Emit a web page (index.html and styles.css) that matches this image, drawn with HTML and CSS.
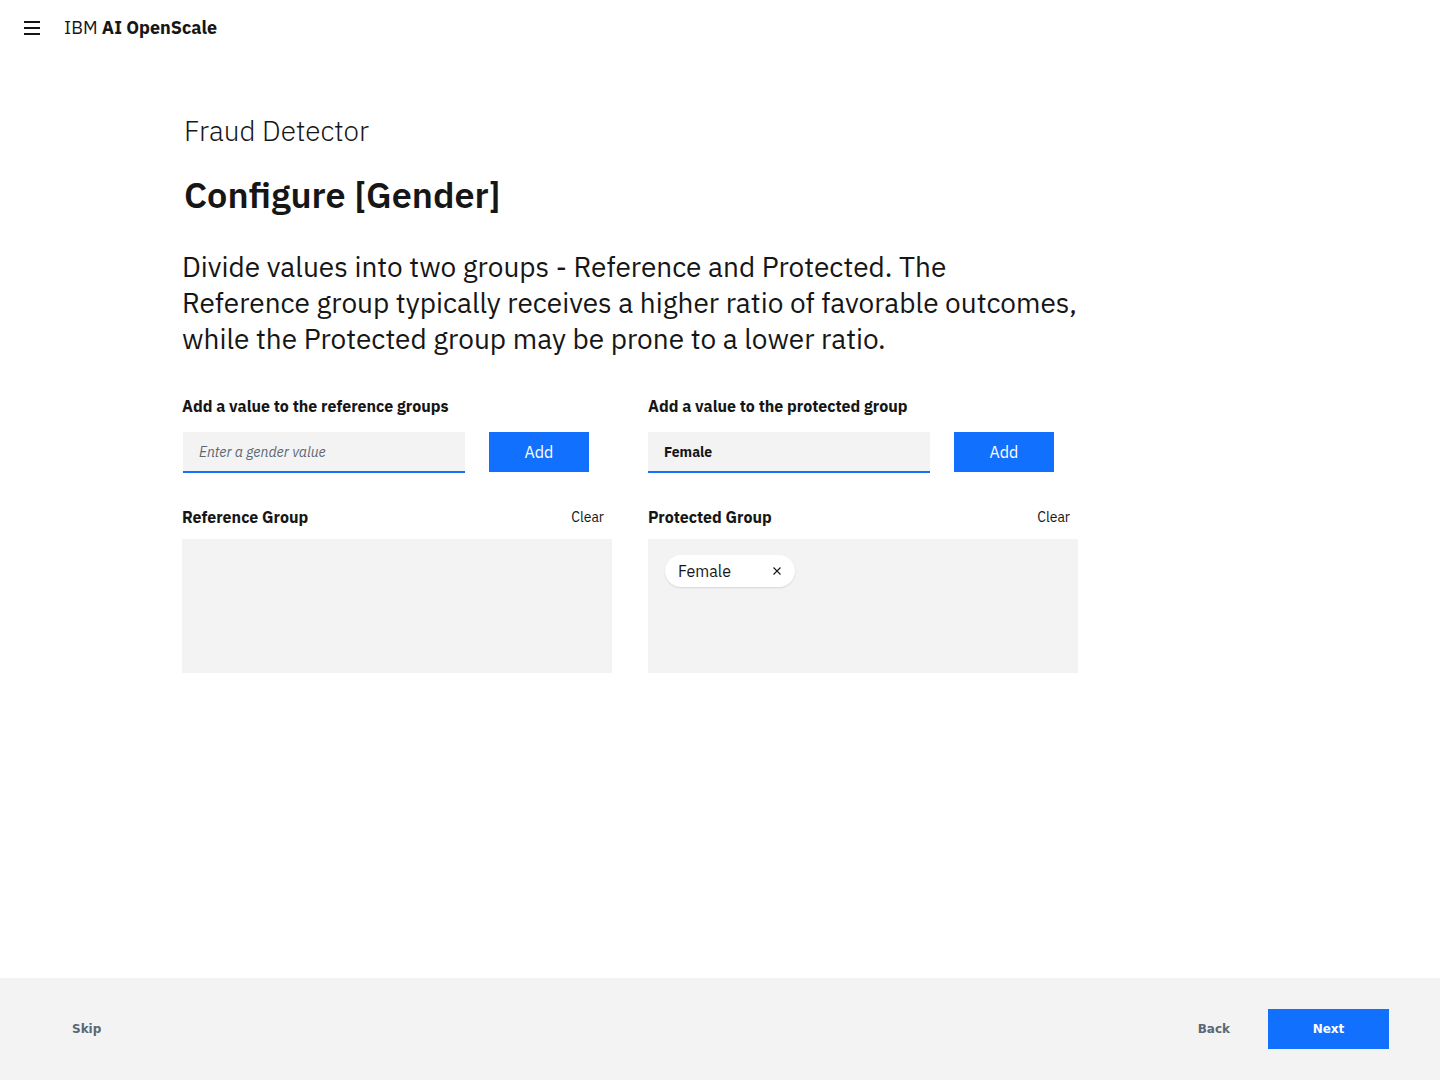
FILE: index.html
```html
<!DOCTYPE html>
<html lang="en">
<head>
<meta charset="utf-8">
<title>IBM AI OpenScale</title>
<link rel="stylesheet" href="styles.css">
</head>
<body>
<header class="topbar">
  <button class="menu-btn" aria-label="Menu">
    <svg width="16" height="14" viewBox="0 0 16 14"><rect x="0" y="0" width="16" height="2" fill="#161616"/><rect x="0" y="6" width="16" height="2" fill="#161616"/><rect x="0" y="12" width="16" height="2" fill="#161616"/></svg>
  </button>
  <span class="brand">IBM <b>AI OpenScale</b></span>
</header>

<main class="content">
  <p class="eyebrow">Fraud Detector</p>
  <h1 class="title">Configure [Gender]</h1>
  <p class="lead">Divide values into two groups - Reference and Protected. The<br>Reference group typically receives a higher ratio of favorable outcomes,<br>while the Protected group may be prone to a lower ratio.</p>

  <div class="columns">
    <section class="col">
      <h2 class="field-label">Add a value to the reference groups</h2>
      <div class="add-row">
        <div class="input placeholder">Enter a gender value</div>
        <button class="btn-add">Add</button>
      </div>
      <div class="group-head">
        <h3 class="group-title">Reference Group</h3>
        <span class="clear">Clear</span>
      </div>
      <div class="group-box"></div>
    </section>

    <section class="col">
      <h2 class="field-label">Add a value to the protected group</h2>
      <div class="add-row">
        <div class="input filled">Female</div>
        <button class="btn-add">Add</button>
      </div>
      <div class="group-head">
        <h3 class="group-title">Protected Group</h3>
        <span class="clear">Clear</span>
      </div>
      <div class="group-box">
        <span class="chip">Female<svg class="chip-x" width="10" height="10" viewBox="0 0 10 10"><path d="M1.5 1.5 L8.5 8.5 M8.5 1.5 L1.5 8.5" stroke="#161616" stroke-width="1.1"/></svg></span>
      </div>
    </section>
  </div>
</main>

<footer class="footer">
  <span class="link-btn">Skip</span>
  <div class="footer-right">
    <span class="link-btn">Back</span>
    <button class="btn-next">Next</button>
  </div>
</footer>
</body>
</html>
```

FILE: styles.css
```css
* { box-sizing: border-box; }
html, body { margin: 0; padding: 0; }
body {
  width: 1440px;
  height: 1080px;
  font-family: "IBM Plex Sans", Roboto, "Liberation Sans", sans-serif;
  color: #161616;
  background: #ffffff;
  display: flex;
  flex-direction: column;
}

.topbar {
  height: 56px;
  display: flex;
  align-items: center;
  padding-left: 24px;
}
.menu-btn {
  border: 0;
  background: none;
  padding: 0;
  width: 16px;
  height: 14px;
  display: flex;
}
.brand {
  margin-left: 24px;
  font-size: 18px;
  font-weight: 400;
  margin-top: -1px;
}
.brand b { font-weight: 700; }

.content {
  flex: 1;
  padding-left: 182px;
  width: 1078px;
}
.eyebrow {
  margin: 57px 0 0 2px;
  font-size: 28px;
  font-weight: 300;
  line-height: 36px;
}
.title {
  margin: 24px 0 0 2px;
  font-size: 36px;
  font-weight: 600;
  line-height: 44px;
}
.lead {
  margin: 32px 0 0 0;
  font-size: 28px;
  font-weight: 400;
  line-height: 36px;
  white-space: nowrap;
}

.columns {
  margin-top: 39px;
  display: grid;
  grid-template-columns: 430px 430px;
  column-gap: 36px;
}
.field-label {
  margin: 0;
  font-size: 16px;
  font-weight: 700;
  line-height: 20px;
}
.add-row {
  margin-top: 16px;
  display: flex;
  gap: 24px;
}
.input {
  width: 282px;
  height: 41px;
  margin-left: 1px;
  background: #f3f3f3;
  border-bottom: 2px solid #1170fe;
  padding: 0 16px;
  display: flex;
  align-items: center;
  font-size: 14px;
}
.col + .col .input { margin-left: 0; }
.placeholder { font-style: italic; color: #5a6872; }
.filled { font-weight: 700; color: #161616; }
.btn-add {
  width: 100px;
  height: 40px;
  border: 0;
  background: #1170fe;
  color: #ffffff;
  font-family: inherit;
  font-size: 16px;
  font-weight: 400;
}
.group-head {
  margin-top: 33px;
  display: flex;
  justify-content: space-between;
  align-items: center;
  height: 22px;
}
.group-title {
  margin: 0;
  font-size: 16px;
  font-weight: 700;
}
.clear {
  font-size: 14px;
  margin-right: 8px;
}
.group-box {
  margin-top: 11px;
  height: 134px;
  background: #f3f3f3;
  padding: 16px 17px;
}
.chip {
  display: inline-flex;
  align-items: center;
  height: 32px;
  width: 130px;
  border-radius: 16px;
  background: #ffffff;
  box-shadow: 0 1px 2px rgba(0,0,0,0.12);
  padding: 0 13px;
  font-size: 16px;
  justify-content: space-between;
}

.footer {
  height: 102px;
  background: #f3f3f3;
  display: flex;
  align-items: center;
  justify-content: space-between;
  padding: 0 51px 0 72px;
  font-family: "DejaVu Sans", sans-serif;
}
.link-btn {
  font-size: 12px;
  font-weight: 700;
  color: #5a6872;
  margin-top: -1px;
}
.footer-right {
  display: flex;
  align-items: center;
  gap: 38px;
}
.btn-next {
  width: 121px;
  height: 40px;
  border: 0;
  background: #1170fe;
  color: #ffffff;
  font-family: "DejaVu Sans", sans-serif;
  font-size: 12px;
  font-weight: 700;
}
```
